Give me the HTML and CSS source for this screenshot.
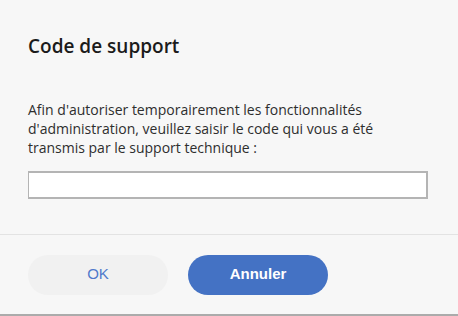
FILE: index.html
```html
<!DOCTYPE html>
<html lang="fr">
<head>
<meta charset="utf-8">
<title>Code de support</title>
<link rel="stylesheet" href="styles.css">
</head>
<body>
<div class="dialog">
  <div class="content">
    <h1 class="title">Code de support</h1>
    <p class="message">Afin d'autoriser temporairement les fonctionnalités d'administration, veuillez saisir le code qui vous a été transmis par le support technique :</p>
    <input class="code-input" type="text">
  </div>
  <div class="footer">
    <button class="btn btn-ok">OK</button>
    <button class="btn btn-cancel">Annuler</button>
  </div>
</div>
</body>
</html>
```

FILE: styles.css
```css
html, body {
  margin: 0;
  padding: 0;
  background: #f7f7f7;
}
.dialog {
  width: 458px;
  height: 316px;
  box-sizing: border-box;
  border-bottom: 2px solid #ababab;
  display: flex;
  flex-direction: column;
  font-family: "Open Sans", "Noto Sans", sans-serif;
}
.content {
  padding: 0 30px 0 28px;
  display: flex;
  flex-direction: column;
  height: 234px;
  box-sizing: border-box;
}
.title {
  margin: 34px 0 0;
  font-size: 19px;
  line-height: 24px;
  font-weight: 600;
  color: #1b1b1b;
}
.message {
  margin: 42px 0 0;
  font-size: 14px;
  line-height: 19px;
  color: #2e2e2e;
}
.code-input {
  margin: 14px 0 0;
  width: 400px;
  height: 28px;
  box-sizing: border-box;
  background: #fff;
  border: 1px solid #b4b4b4;
  border-top-width: 2px;
  border-bottom-width: 2px;
  border-right-width: 2px;
  padding: 0 6px;
  outline: none;
}
.footer {
  border-top: 1px solid #e3e3e3;
  padding: 20px 28px 0;
  display: flex;
  gap: 20px;
}
.btn {
  width: 140px;
  height: 40px;
  border: none;
  border-radius: 20px;
  font-family: "Liberation Sans", Arial, sans-serif;
  font-size: 15px;
  padding: 0 0 4px;
}
.btn-ok {
  background: #f1f1f1;
  color: #4f7acb;
}
.btn-cancel {
  background: #4472c4;
  color: #fff;
  font-weight: 700;
}
```
